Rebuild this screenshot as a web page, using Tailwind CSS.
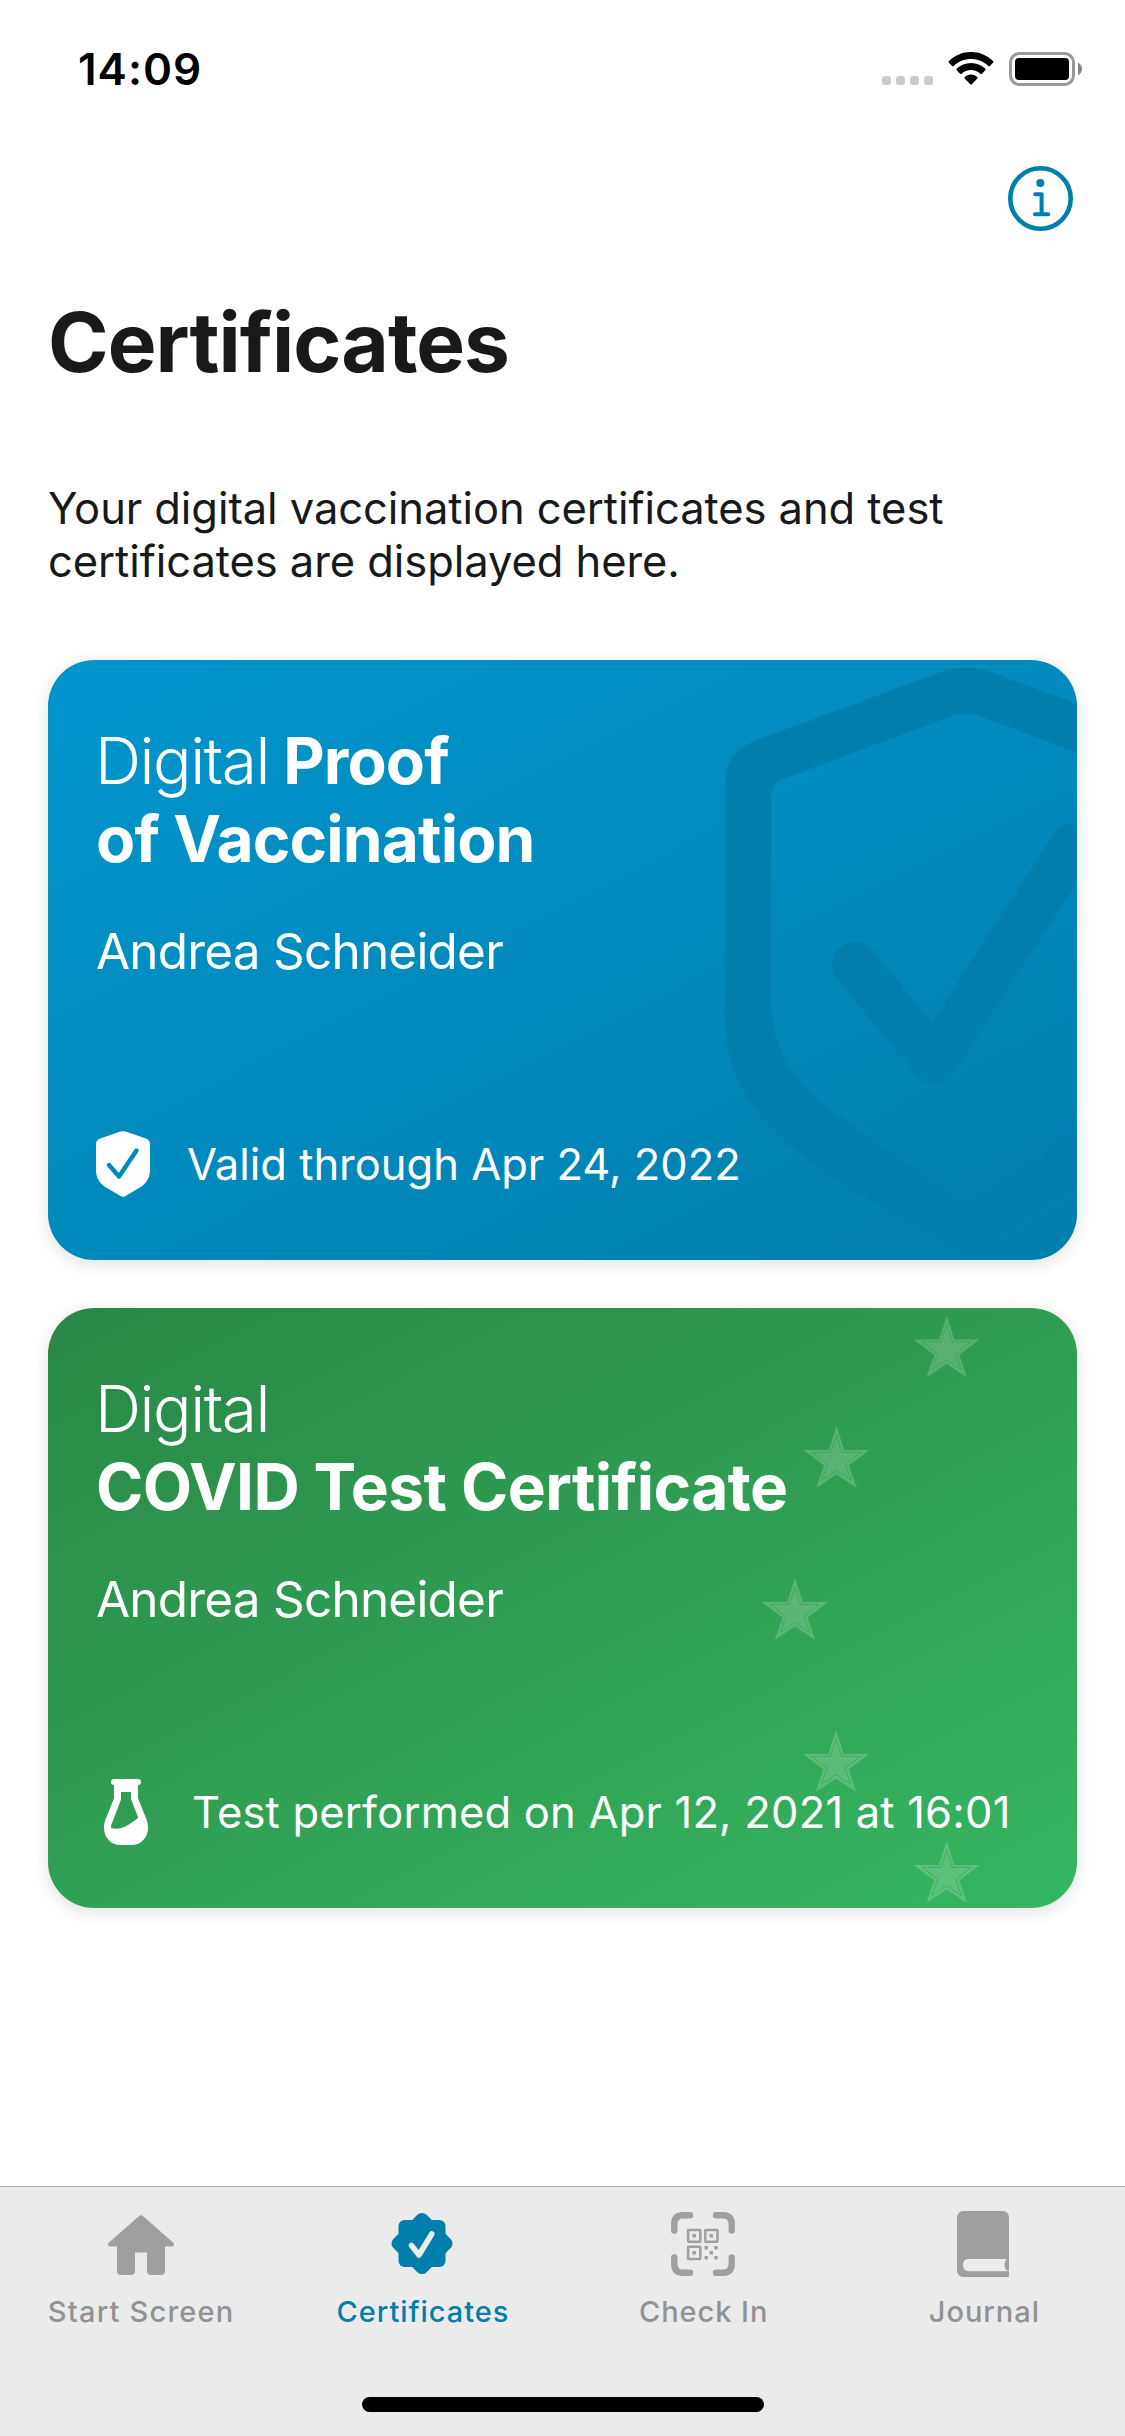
<!DOCTYPE html>
<html lang="en">
<head>
<meta charset="utf-8">
<title>Certificates</title>
<script src="https://cdn.jsdelivr.net/npm/@tailwindcss/browser@4"></script>
</head>
<body class="w-[1125px] h-[2436px] flex flex-col overflow-hidden bg-white font-[Inter,sans-serif] text-[#18191a]">

  <!-- Status bar -->
  <header class="flex justify-between items-start h-[132px] pl-[78px] pr-[42px] text-black">
    <div class="mt-[47px] text-[44px] leading-[44px] font-semibold tracking-[1px]">14:09</div>
    <div class="mt-[52px] flex items-start">
      <div class="flex gap-[5px] mt-6 mr-[15px]">
        <i class="size-[9px] rounded-[3px] bg-[#cacaca]"></i>
        <i class="size-[9px] rounded-[3px] bg-[#cacaca]"></i>
        <i class="size-[9px] rounded-[3px] bg-[#cacaca]"></i>
        <i class="size-[9px] rounded-[3px] bg-[#cacaca]"></i>
      </div>
      <svg class="w-[46px] h-[33px] mr-[15px]" viewBox="0 0 46 33" fill="currentColor">
        <path d="M23 0C31.6 0 39.3 3.4 45 8.9Q46 9.8 45.2 10.6L41.9 14Q41.1 14.7 40.2 13.9C35.7 9.7 29.7 7.1 23 7.1S10.300 9.7 5.800 13.900Q4.900 14.700 4.100 14L.8 10.600Q0 9.800 1 8.900C6.700 3.400 14.400 0 23 0Z"/>
        <path d="M23 11C28.500 11 33.500 13.100 37.200 16.600Q38.100 17.500 37.300 18.300L33.900 21.700Q33.100 22.500 32.200 21.700C29.800 19.500 26.600 18.100 23 18.100S16.200 19.500 13.800 21.700Q12.900 22.500 12.100 21.700L8.700 18.300Q7.900 17.500 8.800 16.600C12.500 13.100 17.500 11 23 11Z"/>
        <path d="M23 22.500C25.500 22.500 27.600 23.400 29.200 24.900Q30.100 25.700 29.300 26.500L23.800 32.200Q23 33 22.200 32.200L16.700 26.500Q15.900 25.700 16.800 24.900C18.400 23.400 20.500 22.500 23 22.500Z"/>
      </svg>
      <svg class="w-[74px] h-[34px]" viewBox="0 0 74 34">
        <rect x="1.500" y="1.500" width="63" height="31" rx="9" fill="none" stroke="#9a9a9a" stroke-width="3"/>
        <rect x="6" y="6" width="54" height="22" rx="4"/>
        <path d="M69 10.800C71.500 12 73 14.200 73 17S71.500 22 69 23.200Z" fill="#868686"/>
      </svg>
    </div>
  </header>

  <div class="flex justify-end h-[170px] pt-[33px] pr-[51px]">
    <svg class="size-[67px]" viewBox="0 0 67 67" fill="none" stroke="#007fad" stroke-linecap="round" stroke-linejoin="round">
      <circle cx="33.500" cy="33.500" r="30.200" stroke-width="4.600"/>
      <circle cx="33.300" cy="18" r="4" fill="#007fad" stroke="none"/>
      <path d="M28.300 29.300H34.600V49.200M28 49.200H41.200" stroke-width="4.100"/>
    </svg>
  </div>

  <main class="flex flex-col px-12">
    <h1 class="text-[82px] leading-[82px] font-bold tracking-[-1px] [font-variant-ligatures:none]">Certificates</h1>
    <p class="mt-[97.500px] text-[43.500px] leading-[53px] tracking-[-0.067px]">Your digital vaccination certificates and test<br>certificates are displayed here.</p>

    <!-- Vaccination card -->
    <section class="relative mt-[72.500px] h-[600px] rounded-[46px] overflow-hidden px-12 pt-[62px] text-white bg-[linear-gradient(153deg,#0095cd,#007fad)] shadow-[0_4px_18px_rgba(0,0,0,0.12)]">
      <svg class="absolute inset-0 w-full h-full" viewBox="0 0 1029 600" fill="#007fad">
        <path fill-rule="evenodd" d="M677 125C677 99 688 87 717 77L893 12Q918 3 943 12L1119 77C1148 87 1159 99 1159 125V351C1159 414 1133 455 1069 500C1040 519 1000 540 937 582Q918 600 899 582C836 548 796 528 767 505C703 458 677 420 677 351ZM723 137V339C723 388 743 421 787 453C818 475 850 499 905 536Q918 543 931 536C986 504 1018 475 1049 453C1093 421 1113 388 1113 339V137Q1113 125 1101 120L929 55Q918 52 907 55L735 119Q723 124 723 137Z"/>
        <path d="M807 305L886 401L1025 186" fill="none" stroke="#007fad" stroke-width="46" stroke-linecap="round" stroke-linejoin="round"/>
      </svg>
      <div class="relative">
        <h2 class="text-[64px] leading-[78px] font-bold tracking-[-0.860px]"><span class="font-light tracking-[-1.450px] -ml-px">Digital</span> <span>Proof</span><br>of Vaccination</h2>
        <p class="mt-[43px] text-[49.500px] leading-[60px] tracking-[-0.800px]">Andrea Schneider</p>
        <div class="mt-[150px] flex h-[66px] text-[43.500px] leading-[66px]">
          <svg class="w-[54px] h-[66px] mr-[37px]" viewBox="0 0 54 66">
            <path fill="#fff" d="M24.500.6Q27-.3 29.500.6L50 7.500Q54 9 54 13V39C54 47 50 53 43 57L29.500 65Q27 66.600 24.500 65L11 57C4 53 0 47 0 39V13Q0 9 4 7.500Z"/>
            <path d="M13 34L23 45.500L40.500 19.500" fill="none" stroke="#0088b9" stroke-width="4.400" stroke-linecap="round" stroke-linejoin="round"/>
          </svg>
          <span>Valid through Apr 24, 2022</span>
        </div>
      </div>
    </section>

    <!-- Test certificate card -->
    <section class="relative mt-12 h-[600px] rounded-[46px] overflow-hidden px-12 pt-[62px] text-white bg-[linear-gradient(153deg,#298747,#36b660)] shadow-[0_4px_18px_rgba(0,0,0,0.12)]">
      <svg class="absolute inset-0 w-full h-full" viewBox="0 0 1029 600">
        <defs>
          <g id="star">
            <path d="M0 0L7.700 24H33L12.500 39.500L20.300 62L0 48.500L-20.300 62L-12.500 39.500L-33 24H-7.700Z" fill="#fff" opacity=".2"/>
            <path d="M0 9L5.500 26.300H24.500L9 38.500L15 54.500L0 44.500L-15 54.500L-9 38.500L-24.500 26.300H-5.500Z" fill="none" stroke="#2f9d53" stroke-width=".8" opacity=".75"/>
          </g>
        </defs>
        <use href="#star" x="898.700" y="7.500"/>
        <use href="#star" x="788.500" y="118"/>
        <use href="#star" x="747" y="270"/>
        <use href="#star" x="788" y="422"/>
        <use href="#star" x="898.700" y="533"/>
      </svg>
      <div class="relative">
        <h2 class="text-[64px] leading-[78px] font-bold tracking-[-0.600px] [font-variant-ligatures:none]"><span class="font-light tracking-[-1.450px] -ml-px">Digital</span><br>COVID Test Certificate</h2>
        <p class="mt-[43px] text-[49.500px] leading-[60px] tracking-[-0.800px]">Andrea Schneider</p>
        <div class="mt-[150px] flex h-[66px] pl-2 text-[43.500px] leading-[66px] tracking-[0.200px]">
          <svg class="w-11 h-[66px] mr-11" viewBox="0 0 44 66" fill="#fff" fill-rule="evenodd">
            <path d="M10 0H34Q37 0 37 3T34 6V19.300L42.700 41C43.600 43.500 44 46 44 49C44 58.500 37 66 27.700 66H16.300C7 66 0 58.500 0 49C0 46 .4 43.500 1.300 41L10 19.300V6Q7 6 7 3T10 0ZM17 13V20.500L7.300 46Q6.900 47.500 7 49C17 51.500 23.500 47 34.300 38.700L27 20V13Z"/>
          </svg>
          <span class="whitespace-nowrap">Test performed on Apr 12, 2021 at 16:01</span>
        </div>
      </div>
    </section>
  </main>

  <!-- Tab bar -->
  <nav class="mt-auto h-[250px] border-t border-[#b0b0b0] bg-[#ebebeb] flex flex-col items-center text-[#929292]">
    <div class="grid grid-cols-4 w-full h-[210px] pt-[22px] text-[29px] leading-[35px] font-medium tracking-[0.950px] [font-variant-ligatures:none]">
      <div class="flex flex-col items-center gap-[15px]">
        <svg class="w-[68px] h-[70px]" viewBox="0 0 68 70" fill="#9f9f9f">
          <path d="M32 7Q34 5.400 36 7L66.500 34Q68 37 65 37.500H58V62Q58 66 54 66H44Q40 66 40 62V43.500H28V62Q28 66 24 66H14Q10 66 10 62V37.500H3Q0 37 1.500 34Z"/>
        </svg>
        <span class="tracking-[1.200px] pl-px">Start Screen</span>
      </div>
      <div class="flex flex-col items-center gap-[15px] text-[#007fad]">
        <svg class="size-[70px]" viewBox="0 0 70 70" fill="currentColor">
          <rect x="11.500" y="11" width="47" height="47" rx="6"/>
          <rect x="11.500" y="11" width="47" height="47" rx="6.500" transform="rotate(45 35 34.500)"/>
          <path d="M24.500 36.500L32 46L44.800 25" fill="none" stroke="#ebebeb" stroke-width="5.600" stroke-linecap="round" stroke-linejoin="round"/>
        </svg>
        <span class="pl-[2px]">Certificates</span>
      </div>
      <div class="flex flex-col items-center gap-[15px]">
        <svg class="w-[64px] h-[70px]" viewBox="0 0 64 70" fill="#9f9f9f">
          <path d="M3.300 21.500V15Q3.300 6.300 12 6.300H19M45 6.300H52Q60.700 6.300 60.700 15V21.500M60.700 48.500V55Q60.700 63.700 52 63.700H45M19 63.700H12Q3.300 63.700 3.300 55V48.500" fill="none" stroke="#9f9f9f" stroke-width="6.400" stroke-linecap="round"/>
          <g fill="none" stroke="#9f9f9f" stroke-width="2.500">
            <rect x="17.100" y="20.900" width="12.200" height="11.800" rx=".6"/>
            <rect x="34.300" y="20.900" width="12.200" height="11.800" rx=".6"/>
            <rect x="17.100" y="37.700" width="12.200" height="12.200" rx=".6"/>
          </g>
          <path d="M21.500 25.100h3.400v3.400h-3.400zM38.600 25.100h3.400v3.400h-3.400zM21.500 42h3.400v3.400h-3.400zM38.600 42h3.400v3.400h-3.400zM33.500 37h3.400v3.400h-3.400zM43.300 37h3.400v3.400h-3.400zM33.500 47h3.400v3.400h-3.400zM43.300 47h3.400v3.400h-3.400z"/>
        </svg>
        <span class="pl-px">Check In</span>
      </div>
      <div class="flex flex-col items-center gap-[15px]">
        <svg class="w-[52px] h-[70px] mr-[3px]" viewBox="0 0 52 70" fill="#9f9f9f">
          <path d="M7 2H45Q52 2 52 9V61Q53 68 51 68H7Q0 68 0 61V9Q0 2 7 2Z"/>
          <path d="M11 50H49.500Q45.500 56 49.500 61.500L52 61.500V62.300H11Q6 61.500 6 56T11 50Z" fill="#ebebeb"/>
        </svg>
        <span>Journal</span>
      </div>
    </div>
    <div class="w-[402px] h-[15px] rounded-full bg-black"></div>
  </nav>
</body>
</html>
